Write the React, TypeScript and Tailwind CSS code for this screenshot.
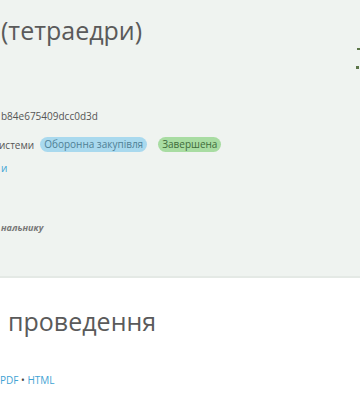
import React from "react";

export default function App() {
  return (
    <div className="w-[360px] h-[400px] overflow-hidden bg-white" style={{ fontFamily: '"Open Sans", "Noto Sans", sans-serif' }}>
      <div className="relative h-[278px] bg-[#eff3f0] border-b-[2px] border-[#e4e9e5]">
        <div className="absolute right-[-4px] top-[46px] w-[8px] h-[28px]">
          <div className="absolute left-[1px] top-[2px] w-[3px] h-[2px] bg-[#5b7548]" />
          <div className="absolute left-[0px] top-[20px] w-[3px] h-[3px] bg-[#5b7548]" />
        </div>
        <div className="flex flex-col pl-[1px]">
          <div className="pt-[14px] text-[25px] leading-[32px] font-normal text-[#5a5a5a]">(тетраедри)</div>
          <div className="mt-[63px] text-[10px] leading-[14px] text-[#555]">b84e675409dcc0d3d</div>
          <div className="mt-[14px] flex items-center text-[10px] leading-[14px] text-[#555]">
            <span className="-ml-[2px]">истеми</span>
            <span className="ml-[6px] rounded-full bg-[#a9d9ee] px-[4px] text-[#4f7f95] leading-[15px]">Оборонна закупівля</span>
            <span className="ml-[11px] rounded-full bg-[#a8dca2] px-[4px] text-[#3f6b3a] leading-[15px]">Завершена</span>
          </div>
          <div className="mt-[9px] text-[10px] leading-[14px] text-[#3fa3d4]">и</div>
          <div className="mt-[46px] text-[9px] leading-[14px] italic font-bold text-[#777]">нальнику</div>
        </div>
      </div>
      <div className="flex flex-col">
        <div className="pt-[27px] pl-[8px] text-[25px] leading-[32px] font-normal text-[#5a5a5a]">проведення</div>
        <div className="mt-[36px] text-[10px] leading-[14px] text-[#3fa3d4]">
          PDF <span className="text-[#444]">•</span> HTML
        </div>
      </div>
    </div>
  );
}
